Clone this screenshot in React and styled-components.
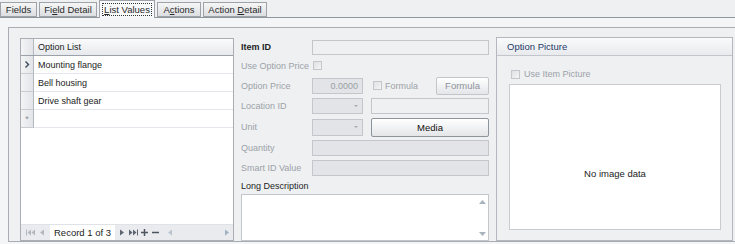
import React from "react";
import styled, { createGlobalStyle } from "styled-components";

const GlobalStyle = createGlobalStyle`
  html, body { margin: 0; padding: 0; }
  body {
    font-family: "Liberation Sans", Arial, sans-serif;
    font-size: 9px;
    color: #1e1e1e;
    background: #f4f5f7;
  }
`;

const Screen = styled.div`
  width: 735px;
  height: 244px;
  overflow: hidden;
  display: flex;
  flex-direction: column;
  background: #f4f5f7;
`;

const TabStrip = styled.div`
  height: 17px;
  display: flex;
  align-items: flex-end;
  gap: 2px;
  border-bottom: 1px solid #8f959c;
  background: #eef0f2;
`;

const Tab = styled.div`
  height: ${(p) => (p.$active ? "18px" : "15px")};
  margin-bottom: ${(p) => (p.$active ? "-1px" : "0")};
  width: ${(p) => p.$w}px;
  box-sizing: border-box;
  display: flex;
  align-items: center;
  justify-content: center;
  border: 1px solid #9ea3a9;
  border-bottom: ${(p) => (p.$active ? "none" : "1px solid #9ea3a9")};
  background: ${(p) =>
    p.$active ? "#f7f8f9" : "linear-gradient(#f6f6f6, #dcdee1)"};
  color: #2a2a2a;
  font-size: 9.5px;
  span.focus {
    outline: ${(p) => (p.$active ? "1px dotted #333" : "none")};
    padding: 0 1px;
  }
  u { text-decoration: underline; }
`;

const PageBody = styled.div`
  flex: 1;
  padding: 9px 0 2px 8px;
  display: flex;
`;

const LayoutBox = styled.div`
  flex: 1;
  border: 1px solid #a8adb4;
  border-right: none;
  background: #eef0f2;
  padding: 10px 0 0 11px;
  display: flex;
  gap: 7px;
  align-items: flex-start;
`;

/* ---------- grid ---------- */

const Grid = styled.div`
  width: 214px;
  height: 203px;
  box-sizing: border-box;
  border: 1px solid #a9aeb5;
  background: #fff;
  display: flex;
  flex-direction: column;
`;

const GridRow = styled.div`
  display: flex;
  height: ${(p) => p.$h}px;
  box-sizing: border-box;
  border-bottom: 1px solid ${(p) => (p.$header ? "#9ca2a9" : "#e3e6ea")};
  background: ${(p) => (p.$header ? "linear-gradient(#fbfbfc, #e7e9ec)" : "#fff")};
`;

const Indicator = styled.div`
  width: 12px;
  flex: none;
  border-right: 1px solid #b4b9bf;
  border-bottom: ${(p) => (p.$header ? "none" : "1px solid #c9cdd2")};
  margin-bottom: ${(p) => (p.$header ? "0" : "-1px")};
  background: linear-gradient(90deg, #f3f4f6, #e2e4e7);
  display: flex;
  align-items: center;
  justify-content: center;
  color: #8a9099;
  font-size: 9px;
`;

const Cell = styled.div`
  flex: 1;
  display: flex;
  align-items: center;
  padding-left: 4px;
  color: #1b1b1b;
`;

const GridFill = styled.div`
  flex: 1;
`;

const Navigator = styled.div`
  height: 15px;
  display: flex;
  align-items: center;
  background: #e9ebee;
  border-top: 1px solid #dfe2e6;
  padding-left: 3px;
`;

const NavBtn = styled.span`
  width: ${(p) => p.$w || 10}px;
  display: flex;
  justify-content: center;
  align-items: center;
`;

const RecordText = styled.span`
  background: #fff;
  height: 15px;
  display: flex;
  align-items: center;
  padding: 0 4px;
  margin: 0 2px;
  font-size: 9.5px;
  color: #222;
`;

const HScroll = styled.div`
  flex: 1;
  display: flex;
  justify-content: space-between;
  align-items: center;
  padding: 0 3px 0 6px;
`;

/* ---------- form ---------- */

const Form = styled.div`
  width: 248px;
  display: flex;
  flex-direction: column;
`;

const FormRow = styled.div`
  height: ${(p) => p.$h}px;
  display: flex;
  align-items: center;
`;

const Label = styled.span`
  width: 71px;
  flex: none;
  color: ${(p) => (p.$dim ? "#9da2a8" : "#1e1e1e")};
  font-weight: ${(p) => (p.$bold ? "bold" : "normal")};
`;

const Input = styled.div`
  width: ${(p) => (p.$w ? `${p.$w}px` : "auto")};
  flex: ${(p) => (p.$w ? "none" : "1")};
  height: ${(p) => p.$h || 16}px;
  box-sizing: border-box;
  border: 1px solid #c3c7cc;
  background: ${(p) => (p.$filled ? "#e2e4e7" : "#eef0f2")};
  margin-left: ${(p) => p.$ml || 0}px;
  display: flex;
  align-items: center;
  justify-content: flex-end;
  padding-right: 4px;
  color: #9a9fa5;
`;

const ComboArrow = styled.span`
  width: 0;
  height: 0;
  border-left: 2px solid transparent;
  border-right: 2px solid transparent;
  border-top: 2px solid #a7acb2;
`;

const Check = styled.span`
  width: 9px;
  height: 9px;
  flex: none;
  box-sizing: border-box;
  border: 1px solid #c4c8cd;
  background: linear-gradient(135deg, #dfe1e4, #f3f4f5);
  margin-left: ${(p) => p.$ml || 0}px;
  margin-right: ${(p) => p.$mr || 0}px;
`;

const DimText = styled.span`
  color: #9da2a8;
`;

const Button = styled.div`
  width: ${(p) => (p.$w ? `${p.$w}px` : "auto")};
  flex: ${(p) => (p.$w ? "none" : "1")};
  height: ${(p) => p.$h}px;
  margin-left: ${(p) => (p.$push ? "auto" : `${p.$ml || 0}px`)};
  box-sizing: border-box;
  border: 1px solid ${(p) => (p.$disabled ? "#c2c6cb" : "#8e949b")};
  border-radius: 2px;
  background: linear-gradient(#ffffff, #f1f2f3 50%, #e3e5e8);
  display: flex;
  align-items: center;
  justify-content: center;
  color: ${(p) => (p.$disabled ? "#8f949a" : "#111")};
  font-size: 9.5px;
`;

const TextArea = styled.div`
  height: 47px;
  box-sizing: border-box;
  border: 1px solid #c3c7cc;
  background: #fff;
  display: flex;
  justify-content: flex-end;
`;

const VScroll = styled.div`
  width: 12px;
  display: flex;
  flex-direction: column;
  justify-content: space-between;
  align-items: center;
  padding: 5px 0 4px;
`;

/* ---------- picture group ---------- */

const Group = styled.div`
  width: 237px;
  height: 204px;
  margin-top: -1px;
  box-sizing: border-box;
  border: 1px solid #b3b8be;
  display: flex;
  flex-direction: column;
`;

const GroupHeader = styled.div`
  height: 17px;
  flex: none;
  border-bottom: 1px solid #c2c6cb;
  background: linear-gradient(#f9fafb, #e8eaed);
  display: flex;
  align-items: center;
  padding-left: 10px;
  color: #1f3a68;
  font-size: 9.5px;
`;

const GroupBody = styled.div`
  flex: 1;
  padding: 8px 11px 10px 12px;
  display: flex;
  flex-direction: column;
`;

const CheckRow = styled.div`
  display: flex;
  align-items: center;
  height: 20px;
  margin-left: 2px;
`;

const PictureBox = styled.div`
  flex: 1;
  background: #fff;
  border: 1px solid #c8ccd1;
  display: flex;
  align-items: center;
  justify-content: center;
  padding-top: 33px;
  box-sizing: border-box;
  color: #222;
  font-size: 9.5px;
`;

const Tri = ({ dir, color = "#6d747c" }) => (
  <svg width="6" height="7" viewBox="0 0 6 7">
    {dir === "left" ? (
      <polygon points="5,0.5 5,6.5 1,3.5" fill={color} />
    ) : (
      <polygon points="1,0.5 1,6.5 5,3.5" fill={color} />
    )}
  </svg>
);

const DoubleTri = ({ dir, color }) => (
  <svg width="9" height="7" viewBox="0 0 9 7">
    {dir === "left" ? (
      <>
        <rect x="0" y="0.5" width="1" height="6" fill={color} />
        <polygon points="5,0.5 5,6.5 1.5,3.5" fill={color} />
        <polygon points="9,0.5 9,6.5 5.5,3.5" fill={color} />
      </>
    ) : (
      <>
        <polygon points="0,0.5 0,6.5 3.5,3.5" fill={color} />
        <polygon points="4,0.5 4,6.5 7.5,3.5" fill={color} />
        <rect x="8" y="0.5" width="1" height="6" fill={color} />
      </>
    )}
  </svg>
);

const tabs = [
  { w: 37, label: <>Fields</> },
  { w: 58, label: <>Fi<u>e</u>ld Detail</> },
  { w: 56, label: <><u>L</u>ist Values</>, active: true },
  { w: 44, label: <>A<u>c</u>tions</> },
  { w: 64, label: <>Action <u>D</u>etail</> },
];

const rows = ["Mounting flange", "Bell housing", "Drive shaft gear"];

export default function App() {
  return (
    <Screen>
      <GlobalStyle />
      <TabStrip>
        {tabs.map((t, i) => (
          <Tab key={i} $w={t.w} $active={t.active}>
            <span className="focus">{t.label}</span>
          </Tab>
        ))}
      </TabStrip>

      <PageBody>
        <LayoutBox>
          <Grid>
            <GridRow $h={17} $header>
              <Indicator $header />
              <Cell>Option List</Cell>
            </GridRow>
            {rows.map((r, i) => (
              <GridRow key={r} $h={18}>
                <Indicator>
                  {i === 0 && (
                    <svg width="6" height="7" viewBox="0 0 6 7">
                      <polyline points="1.5,0.5 4.5,3.5 1.5,6.5" fill="none" stroke="#3b4a5e" strokeWidth="1.4" />
                    </svg>
                  )}
                </Indicator>
                <Cell>{r}</Cell>
              </GridRow>
            ))}
            <GridRow $h={18}>
              <Indicator>*</Indicator>
              <Cell />
            </GridRow>
            <GridFill />
            <Navigator>
              <NavBtn $w={12}><DoubleTri dir="left" color="#b3b8be" /></NavBtn>
              <NavBtn $w={12}><Tri dir="left" color="#b3b8be" /></NavBtn>
              <RecordText>Record 1 of 3</RecordText>
              <NavBtn $w={10}><Tri dir="right" color="#5d6670" /></NavBtn>
              <NavBtn $w={12}><DoubleTri dir="right" color="#5d6670" /></NavBtn>
              <NavBtn $w={11}>
                <svg width="7" height="7" viewBox="0 0 7 7">
                  <rect x="0" y="2.75" width="7" height="1.5" fill="#4d5660" />
                  <rect x="2.75" y="0" width="1.5" height="7" fill="#4d5660" />
                </svg>
              </NavBtn>
              <NavBtn $w={11}>
                <svg width="7" height="7" viewBox="0 0 7 7">
                  <rect x="0" y="2.75" width="7" height="1.5" fill="#4d5660" />
                </svg>
              </NavBtn>
              <HScroll>
                <Tri dir="left" color="#b9c4d0" />
                <Tri dir="right" color="#9fb0c2" />
              </HScroll>
            </Navigator>
          </Grid>

          <Form>
            <FormRow $h={18}>
              <Label $bold>Item ID</Label>
              <Input $h={15} />
            </FormRow>
            <FormRow $h={19}>
              <Label $dim>Use Option Price</Label>
              <Check $ml={1} />
            </FormRow>
            <FormRow $h={21}>
              <Label $dim>Option Price</Label>
              <Input $w={51} $filled>0.0000</Input>
              <Check $ml={10} $mr={3} />
              <DimText>Formula</DimText>
              <Button $w={53} $h={18} $push $disabled>Formula</Button>
            </FormRow>
            <FormRow $h={20}>
              <Label $dim>Location ID</Label>
              <Input $w={51} $filled>
                <ComboArrow />
              </Input>
              <Input $ml={8} />
            </FormRow>
            <FormRow $h={22}>
              <Label $dim>Unit</Label>
              <Input $w={51} $h={17} $filled>
                <ComboArrow />
              </Input>
              <Button $h={19} $ml={8}>Media</Button>
            </FormRow>
            <FormRow $h={20}>
              <Label $dim>Quantity</Label>
              <Input $filled />
            </FormRow>
            <FormRow $h={20}>
              <Label $dim>Smart ID Value</Label>
              <Input $filled />
            </FormRow>
            <FormRow $h={16}>
              <Label>Long Description</Label>
            </FormRow>
            <TextArea>
              <VScroll>
                <svg width="7" height="4" viewBox="0 0 7 4"><polygon points="0,4 7,4 3.5,0" fill="#a9b3be" /></svg>
                <svg width="7" height="4" viewBox="0 0 7 4"><polygon points="0,0 7,0 3.5,4" fill="#a9b3be" /></svg>
              </VScroll>
            </TextArea>
          </Form>

          <Group>
            <GroupHeader>Option Picture</GroupHeader>
            <GroupBody>
              <CheckRow>
                <Check $mr={4} />
                <DimText>Use Item Picture</DimText>
              </CheckRow>
              <PictureBox>No image data</PictureBox>
            </GroupBody>
          </Group>
        </LayoutBox>
      </PageBody>
    </Screen>
  );
}
